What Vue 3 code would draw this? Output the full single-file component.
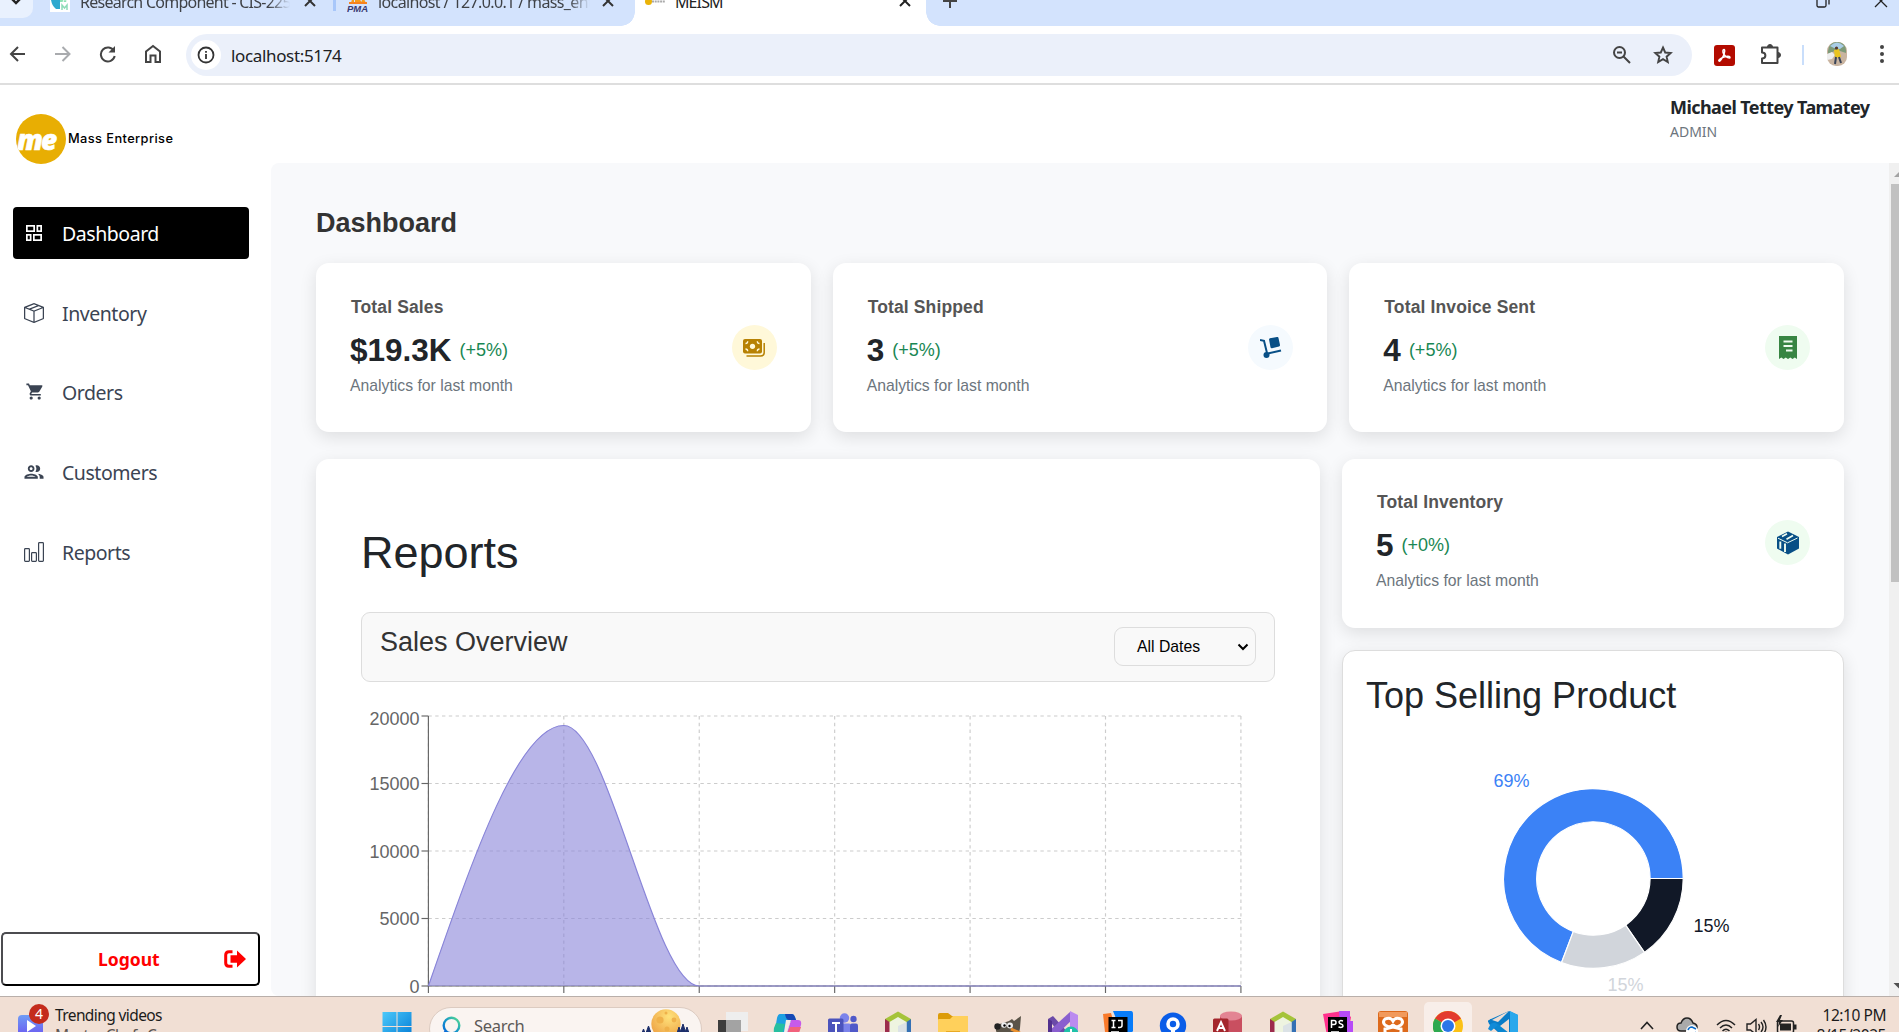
<script setup>
const nav = [
  { key: 'dashboard', label: 'Dashboard', active: true },
  { key: 'inventory', label: 'Inventory' },
  { key: 'orders', label: 'Orders' },
  { key: 'customers', label: 'Customers' },
  { key: 'reports', label: 'Reports' },
]
const stats = [
  { title: 'Total Sales', value: '$19.3K', delta: '(+5%)', icon: 'cash' },
  { title: 'Total Shipped', value: '3', delta: '(+5%)', icon: 'dolly' },
  { title: 'Total Invoice Sent', value: '4', delta: '(+5%)', icon: 'receipt' },
]
const months = ['January', 'February', 'March', 'April', 'May', 'June', 'July']
const ticks = [20000, 15000, 10000, 5000, 0]
const x0 = 67.4
const step = 135.42
const y0 = 288
const h = 270
const gx = (i) => x0 + i * step
const gy = (v) => y0 - (v / 20000) * h
const peak = gy(19300)
const c = step / 3
const curve =
  `M${x0},${y0}C${x0 + c},${y0 - (y0 - peak) / 2} ${gx(1) - c},${peak} ${gx(1)},${peak}` +
  `C${gx(1) + c},${peak} ${gx(2) - c},${y0} ${gx(2)},${y0}H${gx(6)}`

const polar = (r, deg) => {
  const a = (deg * Math.PI) / 180
  return `${(250.4 + r * Math.cos(a)).toFixed(2)},${(228.5 + r * Math.sin(a)).toFixed(2)}`
}
const slice = (from, to) => {
  const big = to - from > 180 ? 1 : 0
  return `M${polar(89.8, from)}A89.8,89.8 0 ${big} 1 ${polar(89.8, to)}L${polar(56.7, to)}A56.7,56.7 0 ${big} 0 ${polar(56.7, from)}Z`
}
const slices = [
  { d: slice(110.77, 360), fill: '#3b82f6' },
  { d: slice(0, 55.38), fill: '#111827' },
  { d: slice(55.38, 110.77), fill: '#d1d5db' },
]
const apps = ['view', 'copilot', 'teams', 'netbeans', 'folder', 'gimp', 'vs', 'ij', 'map', 'access', 'netbeans', 'ps', 'xampp', 'chrome', 'code']
</script>

<template>
  <div class="screen">
    <div class="tabstrip">
      <div class="tabs">
        <div class="tab-search"><svg width="12" height="12" viewBox="0 0 12 12"><path d="M2 4l4 4 4-4" fill="none" stroke="#222" stroke-width="2.400" /></svg></div>
        <div class="tab first">
          <svg class="fav" width="20" height="20" viewBox="0 0 20 20"><rect width="20" height="20" fill="#fff" /><path d="M1 2h9v15H6Q2 14 1 8z" fill="#2fa9cf" /><path d="M10 3h7v7h-7z" fill="#8ee3b4" /><path d="M12 18v-5l2.500 3 2.500-3v5" fill="none" stroke="#8edcb8" stroke-width="1.500" /><path d="M13 10l2-4 2 4" fill="none" stroke="#fff" /></svg>
          <span class="tab-text t1">Research Component - CIS-2250</span>
          <svg class="x" width="12" height="12" viewBox="0 0 12 12"><path d="M1 1l10 10M11 1L1 11" stroke="#333" stroke-width="2" /></svg>
        </div>
        <i class="sep"></i>
        <div class="tab second">
          <svg class="fav" width="22" height="22" viewBox="0 0 22 22"><path d="M4 12L7 1v11zM8 12V0l7 12zM14 12l2-6 3 6z" fill="#f89c1c" /><path d="M2 12h18" stroke="#f6821f" stroke-width="2" /><text x="0" y="21" class="pma">PMA</text></svg>
          <span class="tab-text t2">localhost / 127.0.0.1 / mass_enterprise</span>
          <svg class="x" width="12" height="12" viewBox="0 0 12 12"><path d="M1 1l10 10M11 1L1 11" stroke="#333" stroke-width="2" /></svg>
        </div>
        <div class="tab active">
          <svg class="fav" width="20" height="20" viewBox="0 0 20 20"><circle cx="3.500" cy="9.500" r="3.500" fill="#eab308" /><path d="M7 9.500h13" stroke="#aaa" stroke-width="2" stroke-dasharray="2 .7" /></svg>
          <span class="tab-text t3">MEISM</span>
          <svg class="x" width="12" height="12" viewBox="0 0 12 12"><path d="M1 1l10 10M11 1L1 11" stroke="#222" stroke-width="2" /></svg>
        </div>
        <svg class="plus" width="14" height="14" viewBox="0 0 14 14"><path d="M7 0v14M0 7h14" stroke="#444" stroke-width="2" /></svg>
        <svg class="win" width="72" height="16" viewBox="0 0 72 16"><rect x="1" y="4" width="9" height="10" rx="1.500" fill="none" stroke="#222" stroke-width="1.300" /><path d="M4 1.500h7q2 0 2 2v8" fill="none" stroke="#222" stroke-width="1.300" /><path d="M59 2l12 12M71 2L59 14" stroke="#222" stroke-width="1.300" /></svg>
      </div>
    </div>

    <div class="toolbar">
      <svg class="back" width="18" height="18" viewBox="0 0 18 18"><path d="M16 9H2M9 2L2 9l7 7" fill="none" stroke="#444" stroke-width="2" /></svg>
      <svg class="fwd" width="18" height="18" viewBox="0 0 18 18"><path d="M1 9h14M8.500 2l7 7-7 7" fill="none" stroke="#a9abae" stroke-width="2" /></svg>
      <svg class="reload" width="18" height="18" viewBox="0 0 18 18"><path d="M15 6A7 7 0 1 0 15.700 11" fill="none" stroke="#444" stroke-width="2" /><path d="M16 1v6.500h-6.500z" fill="#444" /></svg>
      <svg class="home" width="18" height="20" viewBox="0 0 18 20"><path d="M2 7.500L9 2l7 5.500V18h-4.500v-6.500h-5V18H2z" fill="none" stroke="#444" stroke-width="2" /></svg>
      <div class="omnibox">
        <div class="info"><svg width="18" height="18" viewBox="0 0 18 18"><circle cx="9" cy="9" r="7.500" fill="none" stroke="#333" stroke-width="1.800" /><path d="M9 8v5M9 5v1.800" stroke="#333" stroke-width="1.800" /></svg></div>
        <span class="url">localhost:5174</span>
        <svg class="zoom" width="20" height="20" viewBox="0 0 20 20"><circle cx="7.500" cy="7.500" r="5.500" fill="none" stroke="#444" stroke-width="2" /><path d="M5 7.500h5M11.500 11.500L18 18" stroke="#444" stroke-width="2" /></svg>
        <svg class="star" width="20" height="20" viewBox="0 0 20 20"><path d="M10 2.500l2.200 5 5.500.5-4.100 3.700 1.200 5.300-4.800-2.800L5.200 17l1.200-5.300L2.300 8l5.500-.5z" fill="none" stroke="#444" stroke-width="1.900" /></svg>
      </div>
      <svg class="pdf" width="21" height="21" viewBox="0 0 21 21"><rect width="21" height="21" rx="3" fill="#b30b00" /><path d="M5 16c-1-1 2-3 5-4s6-1 6 .5-4 0-6-3-1-5 0-5 1 3-1 7-3.500 5-4 4.500z" fill="none" stroke="#fff" stroke-width="1.500" /></svg>
      <svg class="puzzle" width="22" height="22" viewBox="0 0 22 22"><path d="M2 4.500h15.500V20H2v-4.500c4.500 0 4.500-6 0-6z" fill="none" stroke="#444" stroke-width="2" stroke-linejoin="round" /><path d="M7.500 4a2.500 2.500 0 0 1 5 0zM18 9.500a2.500 2.500 0 0 1 0 5z" fill="#444" stroke="#444" /></svg>
      <i class="bar"></i>
      <svg class="avatar" width="20" height="24" viewBox="0 0 20 24"><rect width="20" height="24" rx="9" fill="#c9b4a0" /><path d="M1 9Q2 0 10 0t9 8v3L10 8 1 12z" fill="#7d9a78" /><path d="M3 4q7-7 14 0l-4 3-6-1z" fill="#a9cde6" /><path d="M0 12l5-2 3 3-3 4-5 1z" fill="#eee" /><path d="M7 8l5-1 2 8-6 1z" fill="#e9c420" /><circle cx="9.500" cy="6" r="1.600" fill="#55382c" /><path d="M9 15l-1 7M12 15l2 6" stroke="#384357" stroke-width="2" /></svg>
      <svg class="dots" width="6" height="22" viewBox="0 0 6 22"><g fill="#444"><circle cx="3" cy="4" r="2" /><circle cx="3" cy="11" r="2" /><circle cx="3" cy="18" r="2" /></g></svg>
    </div>

    <div class="page">
      <aside class="sidebar">
        <div class="brand">
          <div class="logo"><span>me</span></div>
          <span class="brand-name">Mass Enterprise</span>
        </div>
        <nav>
          <a v-for="n in nav" :key="n.key" class="nav-item" :class="{ on: n.active }">
            <svg v-if="n.key === 'dashboard'" class="nav-ico" width="20" height="20" viewBox="-2 -2 20 20"><g fill="none" stroke="currentColor" stroke-width="1.700"><rect x=".85" y=".85" width="7.300" height="5.300" /><rect x="11.350" y=".85" width="3.800" height="5.300" /><rect x=".85" y="9.850" width="3.800" height="5.300" /><rect x="7.850" y="9.850" width="7.300" height="5.300" /></g></svg>
            <svg v-else-if="n.key === 'inventory'" class="nav-ico" width="20" height="20" viewBox="0 0 16 16"><path fill="currentColor" d="M8.186 1.113a.5.5 0 0 0-.372 0L1.846 3.500l2.404.961L10.404 2l-2.218-.887zm3.564 1.426L5.596 5 8 5.961 14.154 3.500l-2.404-.961zm3.250 1.700-6.500 2.600v7.922l6.500-2.600V4.240zM7.500 14.762V6.838L1 4.239v7.923l6.500 2.600zM7.443.184a1.500 1.500 0 0 1 1.114 0l7.129 2.852A.5.5 0 0 1 16 3.500v8.662a1 1 0 0 1-.629.928l-7.185 2.874a.5.5 0 0 1-.372 0L.63 13.090a1 1 0 0 1-.63-.928V3.500a.5.5 0 0 1 .314-.464L7.443.184z" /></svg>
            <svg v-else-if="n.key === 'orders'" class="nav-ico" width="20" height="20" viewBox="-2 0 25 25"><path fill="currentColor" d="M7 18c-1.100 0-1.990.9-1.990 2S5.900 22 7 22s2-.9 2-2-.9-2-2-2zM1 2v2h2l3.600 7.590-1.350 2.450c-.16.28-.25.61-.25.96 0 1.100.9 2 2 2h12v-2H7.420c-.14 0-.25-.11-.25-.25l.03-.12.9-1.630h7.450c.75 0 1.410-.41 1.750-1.030l3.580-6.490A1.003 1.003 0 0 0 20 4H5.210l-.94-2H1zm16 16c-1.100 0-1.990.9-1.990 2s.89 2 1.990 2 2-.9 2-2-.9-2-2-2z" /></svg>
            <svg v-else-if="n.key === 'customers'" class="nav-ico" width="20" height="20" viewBox="1.500 1.500 21 21"><path fill="currentColor" d="M9 13.750c-2.340 0-7 1.170-7 3.500V19h14v-1.750c0-2.330-4.660-3.500-7-3.500zM4.340 17c.84-.58 2.870-1.250 4.660-1.250s3.820.67 4.660 1.250H4.340zM9 12c1.930 0 3.500-1.570 3.500-3.500S10.930 5 9 5 5.500 6.570 5.500 8.500 7.070 12 9 12zm0-5c.83 0 1.500.67 1.500 1.500S9.830 10 9 10s-1.500-.67-1.500-1.500S8.170 7 9 7zm7.040 6.810c1.160.84 1.960 1.960 1.960 3.440V19h4v-1.750c0-2.020-3.500-3.170-5.960-3.440zM15 12c1.930 0 3.500-1.570 3.500-3.500S16.930 5 15 5c-.54 0-1.040.13-1.500.35.63.89 1 1.980 1 3.150s-.37 2.260-1 3.150c.46.22.96.35 1.500.35z" /></svg>
            <svg v-else class="nav-ico" width="20" height="20" viewBox="0 0 20 20"><g fill="none" stroke="currentColor" stroke-width="1.200"><rect x=".6" y="6.600" width="4.800" height="12.800" rx=".8" /><rect x="7.600" y="10.600" width="4.800" height="8.800" rx=".8" /><rect x="14.600" y=".6" width="4.800" height="18.800" rx=".8" /></g></svg>
            <span>{{ n.label }}</span>
          </a>
        </nav>
        <button class="logout">
          <span>Logout</span>
          <svg width="22" height="18" viewBox="0 0 22 18"><path d="M8.500 1.700H5Q1.700 1.700 1.700 5v8q0 3.300 3.300 3.300h3.500" fill="none" stroke="#f00" stroke-width="3" /><path d="M6.500 5.300H13V.6L22 9l-9 8.400v-4.700H6.500z" fill="#f00" /></svg>
        </button>
      </aside>

      <div class="content">
        <header>
          <div class="user"><b>Michael Tettey Tamatey</b><span>ADMIN</span></div>
        </header>
        <div class="scroll">
          <main>
            <h2>Dashboard</h2>
            <div class="stats">
              <section v-for="s in stats" :key="s.title" class="card stat">
                <div>
                  <h6>{{ s.title }}</h6>
                  <div class="figure"><strong>{{ s.value }}</strong><span>{{ s.delta }}</span></div>
                  <p>Analytics for last month</p>
                </div>
                <div class="badge" :class="s.icon">
                  <svg v-if="s.icon === 'cash'" width="22" height="18" viewBox="0 0 22 18"><rect x="0" y="0" width="19" height="14.500" rx="2" fill="#b78103" /><path d="M3.500 17h14q3.700 0 3.700-3.500V4" fill="none" stroke="#b78103" stroke-width="1.500" /><circle cx="9.500" cy="7.300" r="2.600" fill="#fff8d9" /><path d="M2.500 4.500q2.200 0 2.200-2.200M16.500 4.500q-2.200 0-2.200-2.200M2.500 10q2.200 0 2.200 2.200M16.500 10q-2.200 0-2.200 2.200" fill="none" stroke="#fff8d9" stroke-width="1.300" /></svg>
                  <svg v-else-if="s.icon === 'dolly'" width="22" height="22" viewBox="0 0 22 22"><path d="M0 3l4 .8L7 16" fill="none" stroke="#084f86" stroke-width="2" /><path d="M9 2.500q0-1 1-1.300L17 0q1.200-.2 1.500 1l1.500 7q.2 1.200-1 1.500l-7 1.700q-1.200.2-1.500-1z" fill="#084f86" /><path d="M8 16.500l13-3" stroke="#084f86" stroke-width="2" /><circle cx="6.500" cy="18" r="3" fill="#084f86" /></svg>
                  <svg v-else width="18" height="23" viewBox="0 0 18 23"><path d="M0 0h18v23l-2.200-1.500L13.500 23l-2.200-1.500L9 23l-2.200-1.500L4.500 23l-2.200-1.500L0 23z" fill="#388543" /><path d="M4.500 5.500h9M4.500 10h9M7 14.500h6.500" stroke="#effcf0" stroke-width="2" /></svg>
                </div>
              </section>
            </div>

            <div class="row">
              <section class="card report">
                <h1>Reports</h1>
                <div class="overview">
                  <h3>Sales Overview</h3>
                  <div class="select"><span>All Dates</span><svg width="12" height="8" viewBox="0 0 12 8"><path d="M1.500 1.500L6 6l4.500-4.500" fill="none" stroke="#000" stroke-width="2" /></svg></div>
                </div>
                <svg class="chart" width="914" height="315" viewBox="0 0 914 315">
                  <g stroke="#ccc" stroke-dasharray="3.400 3.400" stroke-width="1.150">
                    <path v-for="t in ticks" :key="'h' + t" :d="`M${x0} ${gy(t)}H${gx(6)}`" />
                    <path v-for="(m, i) in months" :key="'v' + m" :d="`M${gx(i)} 18V288`" />
                  </g>
                  <g stroke="#666" stroke-width="1.150">
                    <path v-for="t in ticks" :key="'t' + t" :d="`M60.500 ${gy(t)}H${x0}`" />
                    <path v-for="(m, i) in months" :key="'b' + m" :d="`M${gx(i)} 288v7`" />
                    <path :d="`M${x0} 18V288H${gx(6)}`" fill="none" />
                  </g>
                  <path :d="curve" fill="#8884d8" fill-opacity=".6" />
                  <path :d="curve" fill="none" stroke="#8884d8" stroke-width="1.150" />
                  <g class="lbl" text-anchor="end">
                    <text v-for="t in ticks" :key="t" x="58.500" :y="gy(t) + (t === 20000 ? 8.500 : 6.500)">{{ t }}</text>
                  </g>
                  <g class="lbl" text-anchor="middle">
                    <text v-for="(m, i) in months" :key="m" :x="gx(i)" y="310.500">{{ m }}</text>
                  </g>
                </svg>
              </section>

              <div class="side">
                <section class="card stat">
                  <div>
                    <h6>Total Inventory</h6>
                    <div class="figure"><strong>5</strong><span>(+0%)</span></div>
                    <p>Analytics for last month</p>
                  </div>
                  <div class="badge receipt">
                    <svg width="24" height="24" viewBox="0 0 24 24"><path d="M12 .5L23 6v11.500L12 23.500 1 17.500V6z" fill="#084f86" /><path d="M2 7.200L11.500 11.800 21.500 7" fill="none" stroke="#effcf0" stroke-width="1" /><path d="M6 5.500l5-2.700M10.500 8.200l6.500-3.700" stroke="#effcf0" stroke-width="1.700" /><path d="M4.300 10.500v7.300M9 12.500v8.500" stroke="#effcf0" stroke-width="1.900" /></svg>
                  </div>
                </section>
                <section class="card top">
                  <h3>Top Selling Product</h3>
                  <svg class="donut" width="500" height="345" viewBox="0 0 500 345">
                    <path v-for="s in slices" :key="s.fill" :d="s.d" :fill="s.fill" stroke="#fff" stroke-width="1.150" />
                    <text x="150.500" y="136.500" fill="#3b82f6">69%</text>
                    <text x="350.500" y="281.500" fill="#111827">15%</text>
                    <text x="264.500" y="340.500" fill="#d1d5db">15%</text>
                  </svg>
                </section>
              </div>
            </div>
          </main>
          <div class="scrollbar">
            <svg width="10" height="21" viewBox="0 0 10 21"><path d="M5 14l5-5v5z" fill="#a3a3a3" /></svg>
            <i class="thumb"></i>
            <svg width="10" height="21" viewBox="0 0 10 21"><path d="M4.500 8H10v5.500z" fill="#505050" /></svg>
          </div>
        </div>
      </div>
    </div>

    <div class="taskbar">
      <div class="news">
        <svg width="38" height="32" viewBox="0 0 38 32"><defs><linearGradient id="nv" x1="0" y1="0" x2="0" y2="1"><stop offset="0" stop-color="#6f9cf5" /><stop offset="1" stop-color="#6a4cf0" /></linearGradient></defs><rect x="5" y="13" width="25" height="25" rx="4" fill="url(#nv)" /><path d="M14 18l9 6-9 6z" fill="#fff" /><circle cx="26" cy="12" r="10" fill="#c42b1c" /><text x="26" y="17" class="count">4</text></svg>
        <div class="news-text"><span>Trending videos</span><em>Master Chefs C...</em></div>
      </div>
      <svg class="start" width="30" height="30" viewBox="0 0 30 30"><defs><linearGradient id="ws" x1="0" y1="0" x2="1" y2="1"><stop offset="0" stop-color="#4cc9fa" /><stop offset="1" stop-color="#0078d4" /></linearGradient></defs><path d="M.5 0h14v14h-14zM15.500 0h14v14h-14zM.5 15h14v14h-14zM15.500 15h14v14h-14z" fill="url(#ws)" /></svg>
      <div class="search">
        <svg width="19" height="24" viewBox="0 0 19 24"><defs><linearGradient id="sg" x1="0" y1="1" x2="1" y2="0"><stop offset="0" stop-color="#0a6ad8" /><stop offset=".5" stop-color="#1597c9" /><stop offset="1" stop-color="#5be08a" /></linearGradient></defs><circle cx="9.500" cy="9.500" r="7.800" fill="none" stroke="url(#sg)" stroke-width="2.400" /><path d="M4 15l-4 5" stroke="#0a6ad8" stroke-width="2.400" /></svg>
        <span>Search</span>
        <svg class="moon" width="50" height="24" viewBox="0 0 50 24"><defs><radialGradient id="mg" cx=".6" cy=".25" r=".8"><stop offset="0" stop-color="#ffe27a" /><stop offset="1" stop-color="#eda043" /></radialGradient></defs><circle cx="25" cy="15" r="14.700" fill="url(#mg)" /><g fill="#efb14a"><circle cx="19" cy="11" r="3.600" /><circle cx="25" cy="4" r="1.500" /><circle cx="33" cy="11" r="2.400" /><circle cx="26" cy="20" r="2.500" /></g><path d="M1 24l1.500-4 1.500 4zM5 24l2.500-7 2.500 7zM36 24l2-6 2 6zM39 24l3-9 3 9zM44 24l2-6 2 6z" fill="#1d2f6b" stroke="#1d2f6b" /></svg>
      </div>
      <div class="apps">
        <div v-for="(a, i) in apps" :key="i" class="app" :class="{ live: a === 'chrome' }">
          <svg width="30" height="30" viewBox="0 0 30 30">
            <template v-if="a === 'view'"><rect x="8" y="1" width="22" height="19" fill="#eee" /><rect x="0" y="9" width="23" height="21" fill="#3d3d3d" /><rect x="8" y="9" width="15" height="12" fill="#a3a3a3" /></template>
            <template v-else-if="a === 'copilot'"><path d="M7 3h12q2 0 3 3l1 3-6 2-5 13H4q-3 0-2-5L4 7q1-4 3-4z" fill="#1da0e2" /><path d="M1 17l2-5 9 1-3 12H4q-4 0-3-8z" fill="#27bfa0" /><path d="M12 3h7q2 0 3 3l1 3h-7q-3 0-4-6z" fill="#1648b5" /><path d="M18 9h7q4 0 3 5l-3 9q-1 6-5 6h-8z" fill="#c65bea" /><path d="M17 16h11l-3 9q-1 5-6 5h-8z" fill="#f2627c" /><path d="M13 9h5l-6 17-2 1z" fill="#f7ebe5" /></template>
            <template v-else-if="a === 'teams'"><circle cx="16.500" cy="7" r="4.700" fill="#7b83eb" /><circle cx="25.500" cy="8" r="3.200" fill="#5059c9" /><rect x="9" y="12.500" width="14" height="18" rx="2" fill="#7b83eb" /><rect x="22" y="12.500" width="8" height="15" rx="2" fill="#5059c9" /><rect x="0" y="7.500" width="15.500" height="16" rx="1.500" fill="#4b53bc" /><path d="M4 12h8M8 12v9" stroke="#fff" stroke-width="2" /></template>
            <template v-else-if="a === 'netbeans'"><path d="M15 .5L28 8v15l-13 7-13-7V8z" fill="#a5c33a" /><path d="M2 8l6 4v17l-6-5z" fill="#9c2c4c" /><path d="M28 8l-6 4v17l6-5z" fill="#3470b4" /><path d="M15 6l8.500 5v11L15 27l-8.500-5V11z" fill="#eef4e0" /><path d="M15 15v12l8.500-5V11z" fill="#dbe2e6" /></template>
            <template v-else-if="a === 'folder'"><path d="M0 4q0-2 2-2h8l4 3h14q2 0 2 2v20H0z" fill="#dc9c0a" /><path d="M0 9q0-1 1-1h11l3-3h14q1 0 1 1v24H0z" fill="#ffd05b" /><rect x="8" y="20" width="14" height="8" fill="#e9aa24" /></template>
            <template v-else-if="a === 'gimp'"><path d="M3 14l7-2 6-2 3-2 2 2 7-5-1 12q-1 10-12 13H8L3 20z" fill="#5a5448" /><circle cx="4.500" cy="15.500" r="3.200" fill="#222" /><circle cx="11" cy="14" r="2.800" fill="#eee" /><circle cx="17" cy="14.500" r="3" fill="#eee" /><circle cx="11.500" cy="14.500" r="1.200" /><circle cx="16.500" cy="15" r="1.200" /><path d="M18 18l9 4" stroke="#e9902f" stroke-width="3" /></template>
            <template v-else-if="a === 'vs'"><path d="M0 8l5-3 18 20-6 4z" fill="#6b4aa8" /><path d="M22 1L0 21v4l5 2L24 9z" fill="#8a5fcf" /><path d="M22 0l8 4v24l-8 2z" fill="#bb8af0" /><path d="M0 8v15l4-2V10z" fill="#52308e" /><circle cx="23" cy="23" r="7.500" fill="#1fc2a8" /><path d="M23 18v8" stroke="#fff" stroke-width="2" /></template>
            <template v-else-if="a === 'ij'"><path d="M0 3l8-1 8 28H3z" fill="#f97a2a" /><path d="M10 0h18q2 0 2 3v17l-8 10z" fill="#087cfa" /><rect x="5.500" y="6" width="19" height="24" /><path d="M8.500 9.500h4M10.500 9.500v7M8.500 16.500h4M15 9.500h4v5q0 2-2.500 2H15" fill="none" stroke="#fff" stroke-width="1.500" /><path d="M8 21h8" stroke="#fff" stroke-width="1.500" /></template>
            <template v-else-if="a === 'map'"><circle cx="15" cy="14.700" r="13.200" fill="#0a5de8" /><circle cx="15" cy="13" r="5" fill="none" stroke="#fff" stroke-width="3.600" /><path d="M15 18v12" stroke="#fff" stroke-width="4" /></template>
            <template v-else-if="a === 'access'"><path d="M7 5q11-8 22 0v25H7z" fill="#c94f60" /><ellipse cx="18" cy="5" rx="11" ry="4.500" fill="#e38493" /><rect x="0" y="7.500" width="15.500" height="16" rx="1.500" fill="#a4262c" /><path d="M4 20l4-9 4 9M5.500 17h5" fill="none" stroke="#fff" stroke-width="1.900" /></template>
            <template v-else-if="a === 'ps'"><path d="M0 3L20 0l8 6-4 24H5z" fill="#ff318c" /><path d="M16 0h11v10h3v20H18z" fill="#b74af7" /><rect x="5" y="6" width="19" height="24" /><path d="M8.500 17V9.500h2.500q2 0 2 2t-2 2H8.500M20 10q-3.500-1.200-4 1 0 1.500 2 2t2 2q-.5 2.200-4.500 1" fill="none" stroke="#fff" stroke-width="1.500" /><path d="M8 21h8" stroke="#fff" stroke-width="1.500" /></template>
            <template v-else-if="a === 'xampp'"><rect width="30" height="32" rx="3" fill="#dd6a1c" /><rect x="1" y="1" width="28" height="5" fill="#f19a5c" /><path d="M7 8q-3 3 0 6l4 2q4-1 4-3 0 2 4 3l4-2q3-3 0-6-6-2-8 2-2-4-8-2zM7 18l8-2 8 2v12H7z" fill="none" stroke="#fff" stroke-width="3" /></template>
            <template v-else-if="a === 'chrome'"><circle cx="15" cy="15" r="15" fill="#fbc116" /><path d="M15 15L2 7.500Q7 0 15 0t13 7.500z" fill="#e33b2e" /><path d="M15 15L2 7.500Q-3 16 3 24t10 6z" fill="#2da94f" /><circle cx="15" cy="15" r="7.500" fill="#fff" /><circle cx="15" cy="15" r="6" fill="#2a76e8" /></template>
            <template v-else><path d="M21 0l9 4v24l-9 3L1 13l-1-3 3-2z" fill="#0a7cc7" /><path d="M0 10l3-2 18 13v10z" fill="#0a86d0" /><path d="M21 8v14L12 15z" fill="#f0ddd2" /><path d="M4 10l6 4-7 6-3-2z" fill="#118bd8" /><path d="M3 8l5 3-6 2-2-3z" fill="#0a7cc7" /><path d="M22 0l8 4v24l-8 3z" fill="#2aa8ec" /><path d="M4 9l17-9-11 11z" fill="#f0ddd2" /></template>
          </svg>
        </div>
      </div>
      <div class="tray">
        <svg class="chev" width="14" height="9" viewBox="0 0 14 9"><path d="M1 8l6-6.500L13 8" fill="none" stroke="#222" stroke-width="1.600" /></svg>
        <svg class="cloud" width="22" height="20" viewBox="0 0 22 20"><path d="M5 14q-4 0-4-4t4-4q2-5 6-5t6 5q4 1 4 4t-4 4z" fill="#aaa" stroke="#222" stroke-width="1.500" /><circle cx="16" cy="14" r="6" fill="#fff" /><path d="M12 13q1-3 4-3l4 2M12 17q2 1 4 1t4-3" fill="none" stroke="#0a6ac8" stroke-width="1.600" /></svg>
        <svg class="wifi" width="20" height="18" viewBox="0 0 20 18"><g fill="none" stroke="#222" stroke-width="1.500"><path d="M1 7q9-9 18 0M4 10q6-6 12 0M6.500 13q3.500-3.500 7 0" /></g><circle cx="10" cy="15.500" r="2" fill="#222" /></svg>
        <svg class="vol" width="21" height="18" viewBox="0 0 21 18"><g fill="none" stroke="#222" stroke-width="1.400"><path d="M1 6h3.500L10 1.500v15L4.500 12H1zM12.500 6q2 3 0 6M15 4q4 5 0 10M17.500 2q5 7 0 14" /></g></svg>
        <svg class="bat" width="21" height="20" viewBox="0 0 21 20"><rect x="1.500" y="6" width="16" height="12" rx="2" fill="none" stroke="#222" stroke-width="1.500" /><rect x="4" y="8.500" width="11" height="7" fill="#222" /><rect x="18" y="9.500" width="2.500" height="5" fill="#222" /><path d="M4 0L0 7h3l-1 5 5-7H4l2-5z" fill="#222" /></svg>
        <div class="clock"><span class="time">12:10 PM</span><span class="date">8/15/2025</span></div>
      </div>
    </div>
  </div>
</template>

<style>
body { margin: 0; overflow: hidden; }
</style>

<style scoped>
* { box-sizing: border-box; }
svg { display: block; flex: none; }
h1, h2, h3, h6, p { margin: 0; }
.screen { width: 1899px; height: 1032px; overflow: hidden; display: flex; flex-direction: column; background: #fff; font-family: "Noto Sans", "Open Sans", sans-serif; }

.tabstrip { height: 26px; flex: none; overflow: hidden; background: #d3e3fd; }
.tabs { height: 48px; margin-top: -22px; display: flex; align-items: center; }
.tab-search { width: 33px; height: 34px; border-radius: 0 10px 10px 0; background: #e9f1fe; display: flex; align-items: center; padding-left: 10px; margin-top: -2px; }
.tab { display: flex; align-items: center; height: 48px; }
.first { width: 300px; padding-left: 17px; }
.second { width: 299px; padding-left: 11px; }
.active { width: 291px; padding-left: 10px; background: #fff; position: relative; }
.active::before, .active::after { content: ""; position: absolute; bottom: 0; width: 14px; height: 14px; }
.active::before { left: -14px; background: radial-gradient(circle at 0 0, #d3e3fd 13.500px, #fff 14px); }
.active::after { right: -14px; background: radial-gradient(circle at 14px 0, #d3e3fd 13.500px, #fff 14px); }
.active::after { right: 0; transform: translateX(14px); }
.fav { margin-right: 10px; }
.tab-text { font-size: 16px; line-height: 24px; color: #3f4247; white-space: nowrap; overflow: hidden; letter-spacing: -.8px; flex: none; }
.t1 { width: 210px; letter-spacing: -.75px; -webkit-mask-image: linear-gradient(90deg, #000 90%, transparent); }
.t2 { width: 212px; margin-left: -1px; letter-spacing: -.62px; -webkit-mask-image: linear-gradient(90deg, #000 90%, transparent); }
.t3 { width: 224px; letter-spacing: -.9px; color: #222; }
.x { margin-left: 14px; margin-top: -3px; }
.second .x { margin-left: 12px; }
.t3 + .x { margin-left: 0; }
.pma { font: italic bold 9.500px "Liberation Sans", sans-serif; fill: #3a3a72; }
.sep { width: 3px; height: 18px; background: #a8c7fa; }
.plus { margin-left: 17px; margin-top: -2px; }
.win { margin-left: auto; margin-right: 11px; margin-top: -3px; }

.toolbar { height: 59px; flex: none; background: #fff; border-bottom: 2px solid #dedede; display: flex; align-items: center; padding-left: 9px; }
.toolbar > svg { margin-top: -1px; }
.toolbar > .fwd { margin-left: 27px; }
.toolbar > .reload { margin-left: 27px; }
.toolbar > .home { margin-left: 27px; }
.omnibox { margin-left: 24px; margin-top: 1px; width: 1506px; height: 42px; border-radius: 21px; background: #ebf0fa; display: flex; align-items: center; padding-left: 5px; margin-right: 0; }
.info { width: 30px; height: 30px; border-radius: 50%; background: #fff; display: flex; align-items: center; justify-content: center; }
.url { margin-left: 10px; font-size: 17px; letter-spacing: -.35px; color: #202124; }
.zoom { margin-left: auto; }
.star { margin: 0 19px 0 21px; }
.toolbar > .pdf { margin-left: 22px; margin-top: 1px; }
.puzzle { margin-left: 25px; }
.bar { width: 2px; height: 20px; background: #c9defb; margin-left: 20px; }
.avatar { margin-left: 23px; }
.dots { margin-left: 32px; }

.page { height: 911px; flex: none; display: flex; }
.sidebar { width: 271px; display: flex; flex-direction: column; }
.brand { display: flex; align-items: center; height: 50px; margin: 29px 0 0 16px; }
.logo { width: 50px; height: 50px; border-radius: 50%; background: #e8ae03; color: #fff; overflow: hidden; }
.logo span { display: block; font: italic 800 28px/30px "Open Sans", sans-serif; letter-spacing: -2px; margin: 10px 0 0 1px; -webkit-text-stroke: .6px #fff; }
.brand-name { font: 500 12.800px/16px Inter, sans-serif; letter-spacing: .42px; color: #000; margin-left: 2px; white-space: nowrap; }
nav { margin: 43px 0 0 13px; width: 236px; }
.nav-item { display: flex; align-items: center; height: 52px; margin-bottom: 27.700px; padding-left: 11px; border-radius: 4px; font-size: 19.500px; line-height: 28px; letter-spacing: -.45px; color: #3b4453; }
.nav-item span { margin-top: 2px; }
.nav-item.on { background: #000; color: #fff; }
.nav-ico { margin-right: 18px; }
.logout { margin: auto 0 10px 1px; width: 259px; height: 54px; padding: 0 12px 0 95px; display: flex; align-items: center; justify-content: space-between; background: #fff; border: 2px solid; border-color: #4c4c50 #000 #000 #4c4c50; border-radius: 5px; font: bold 17.500px "Noto Sans", sans-serif; color: #f00; }

.content { flex: 1; display: flex; flex-direction: column; }
header { height: 78px; flex: none; }
.user { margin-left: 1399px; padding-top: 9px; display: flex; flex-direction: column; white-space: nowrap; }
.user b { font-size: 18px; line-height: 26px; letter-spacing: -.58px; color: #212529; }
.user span { font-size: 14px; line-height: 22px; margin-top: 1px; color: #6c757d; }
.scroll { height: 833px; display: flex; background: #f8f9fb; border-radius: 8px 0 0 8px; overflow: hidden; }
main { width: 1618px; padding: 45px 45px 0; font-family: "Liberation Sans", Arial, sans-serif; }
h2 { font-size: 27px; line-height: 31px; color: #333; margin-bottom: 24px; }
.stats { display: flex; gap: 22px; }
.card { background: #fff; border-radius: 13px; box-shadow: 0 5px 17px rgba(0, 0, 0, .11); }
.stat { height: 169px; flex: 1; display: flex; justify-content: space-between; padding: 33px 34px 0 35px; }
h6 { font-size: 17.500px; line-height: 22px; letter-spacing: .13px; color: #555; white-space: nowrap; }
.figure { display: flex; align-items: center; gap: 8px; height: 36px; margin: 14px 0 0 -1px; }
.figure strong { font-size: 31.500px; color: #212529; }
.figure span { font-size: 18px; color: #198754; }
p { font-size: 15.750px; line-height: 20px; margin-top: 8px; color: #6c757d; margin-left: -1px; }
.badge { width: 45px; height: 45px; border-radius: 50%; display: flex; align-items: center; justify-content: center; margin-top: 29px; background: #effcf0; }
.cash { background: #fff8d9; }
.dolly { background: #f5fafe; }
.row { display: flex; gap: 22px; margin-top: 27px; }
.report { width: 1004px; height: 700px; padding: 68px 45px 0; }
h1 { font-size: 45px; line-height: 52px; font-weight: 400; color: #212529; }
.overview { height: 70px; margin-top: 33px; border: 1px solid #ddd; border-radius: 9px; background: #f9f9f9; display: flex; justify-content: space-between; padding: 13px 18px 0; }
.overview h3 { font-size: 27px; line-height: 32px; font-weight: 400; color: #333; }
.select { width: 142px; height: 39px; margin-top: 1px; border: 1px solid #ddd; border-radius: 9px; display: flex; align-items: center; justify-content: space-between; padding: 0 6px 0 22px; font-size: 15.750px; color: #000; }
.chart { margin-top: 16px; }
.lbl text { font-size: 18px; fill: #666; }
.side { width: 502px; display: flex; flex-direction: column; gap: 22px; }
.side .stat { flex: none; padding-top: 32px; }
.side .badge { margin-top: 29px; }
.top { height: 500px; border: 1px solid #ddd; padding-top: 25px; }
.top h3 { font-size: 36px; line-height: 40px; font-weight: 400; color: #212529; margin-left: 23px; white-space: nowrap; }
.donut { margin-top: -66px; }
.donut text { font-size: 18px; }
.scrollbar { width: 10px; background: #f0f0f0; display: flex; flex-direction: column; }
.thumb { height: 398px; background: #c1c1c1; margin: 0 0 auto 2px; }

.taskbar { height: 36px; flex: none; border-top: 1px solid #b9afaa; background: #f1dfd4; display: flex; overflow: hidden; }
.news { width: 382px; display: flex; padding: 5px 0 0 13px; }
.count { font: 14px "Noto Sans", sans-serif; fill: #fff; text-anchor: middle; }
.news-text { display: flex; flex-direction: column; padding-top: 3px; margin-left: 4px; font-size: 15.500px; line-height: 20px; letter-spacing: -.6px; color: #1b1b1b; white-space: nowrap; }
.news-text em { font-style: normal; color: #5c5450; }
.start { margin-top: 15px; }
.search { width: 273px; height: 44px; margin: 10px 0 0 17px; border-radius: 22px; background: #faf4f1; border: 1px solid #dccbc1; display: flex; padding-left: 12px; }
.search > svg { margin-top: 8px; }
.search span { margin: 5px auto 0 13px; font-size: 16.500px; line-height: 26px; letter-spacing: -.3px; color: #5d5a58; }
.search .moon { margin: 1px 10px 0 0; }
.apps { display: flex; margin-left: 3.500px; }
.app { width: 55px; height: 50px; padding: 14px 0 0 12.500px; }
.live { position: relative; }
.live::before { content: ""; position: absolute; left: 3.500px; top: 5px; width: 48px; height: 48px; border-radius: 5px; background: #f8eee9; }
.live svg { position: relative; }
.tray { display: flex; flex: 1; }
.chev { margin: 24px 0 0 109px; }
.cloud { margin: 20px 0 0 22px; }
.wifi { margin: 21px 0 0 18px; }
.vol { margin: 21px 0 0 10px; }
.bat { margin: 18px 0 0 9px; }
.clock { display: flex; flex-direction: column; align-items: flex-end; margin-left: auto; padding: 8px 13px 0 0; font-size: 15.500px; line-height: 20px; letter-spacing: -.45px; color: #1b1b1b; white-space: nowrap; }
</style>
